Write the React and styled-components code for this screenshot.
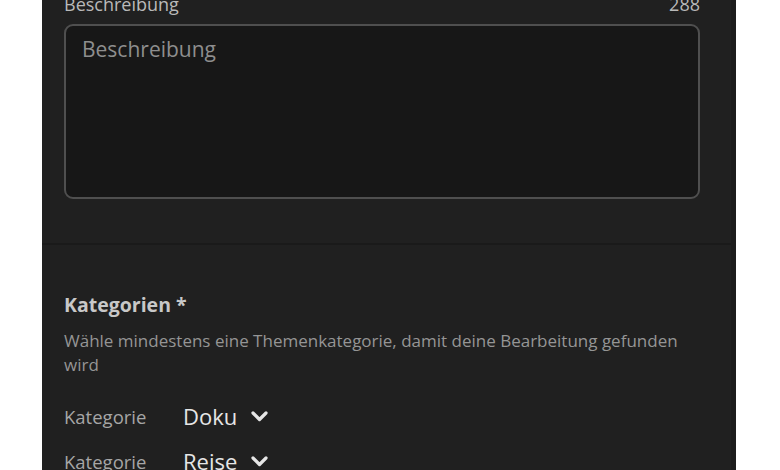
import React from 'react';
import styled, { createGlobalStyle } from 'styled-components';

const GlobalStyle = createGlobalStyle`
  html, body {
    margin: 0;
    padding: 0;
    background: #ffffff;
    overflow: hidden;
  }
  body {
    font-family: "Open Sans", "Noto Sans", sans-serif;
  }
`;

const Page = styled.div`
  width: 780px;
  height: 470px;
  overflow: hidden;
  background: #ffffff;
`;

const Panel = styled.div`
  width: 694px;
  margin: -8px 0 0 42px;
  background: #202020;
  border-right: 5px solid #1c1c1c;
  box-sizing: border-box;
  min-height: 490px;
`;

const Section = styled.section`
  padding: ${p => p.$top || 0}px 31px ${p => p.$bottom || 0}px 22px;
  border-bottom: ${p => (p.$divider ? '2px solid #1a1a1a' : 'none')};
`;

const LabelRow = styled.div`
  display: flex;
  justify-content: space-between;
  align-items: center;
  height: 24px;
  font-size: 18px;
  color: #b9b9b9;
  margin-bottom: 8px;
`;

const TextArea = styled.textarea`
  display: block;
  width: 100%;
  height: 175px;
  box-sizing: border-box;
  background: #171717;
  border: 2px solid #4f4f4f;
  border-radius: 9px;
  padding: 9px 16px;
  resize: none;
  font-family: "Open Sans", "Noto Sans", sans-serif;
  font-size: 21px;
  color: #e0e0e0;
  outline: none;

  &::placeholder {
    color: #8e8e8e;
  }
`;

const Heading = styled.h3`
  margin: 0 0 12px;
  font-size: 19.5px;
  line-height: 24px;
  font-weight: 700;
  color: #c8c8c8;
`;

const Hint = styled.p`
  margin: 0 0 23px;
  font-size: 17px;
  line-height: 24px;
  color: #959595;
`;

const CategoryList = styled.div`
  display: flex;
  flex-direction: column;
  gap: 13px;
`;

const CategoryRow = styled.div`
  display: flex;
  align-items: center;
  height: 32px;
`;

const RowLabel = styled.span`
  width: 119px;
  font-size: 18.5px;
  color: #a6a6a6;
`;

const Picker = styled.button`
  display: flex;
  align-items: center;
  gap: 14px;
  padding: 0;
  border: none;
  background: transparent;
  font-family: "Open Sans", "Noto Sans", sans-serif;
  font-size: 22px;
  color: #e6e6e6;
  cursor: pointer;
`;

function Chevron() {
  return (
    <svg width="17" height="11" viewBox="0 0 17 11" fill="none">
      <path d="M2 2l6.5 6.5L15 2" stroke="#e6e6e6" strokeWidth="3.2" strokeLinecap="round" strokeLinejoin="round" />
    </svg>
  );
}

const categories = ['Doku', 'Reise'];

export default function App() {
  return (
    <Page>
      <GlobalStyle />
      <Panel>
        <Section $bottom={44} $divider>
          <LabelRow>
            <span>Beschreibung</span>
            <span>288</span>
          </LabelRow>
          <TextArea placeholder="Beschreibung" />
        </Section>
        <Section $top={48}>
          <Heading>Kategorien *</Heading>
          <Hint>Wähle mindestens eine Themenkategorie, damit deine Bearbeitung gefunden wird</Hint>
          <CategoryList>
            {categories.map(c => (
              <CategoryRow key={c}>
                <RowLabel>Kategorie</RowLabel>
                <Picker>
                  {c}
                  <Chevron />
                </Picker>
              </CategoryRow>
            ))}
          </CategoryList>
        </Section>
      </Panel>
    </Page>
  );
}
